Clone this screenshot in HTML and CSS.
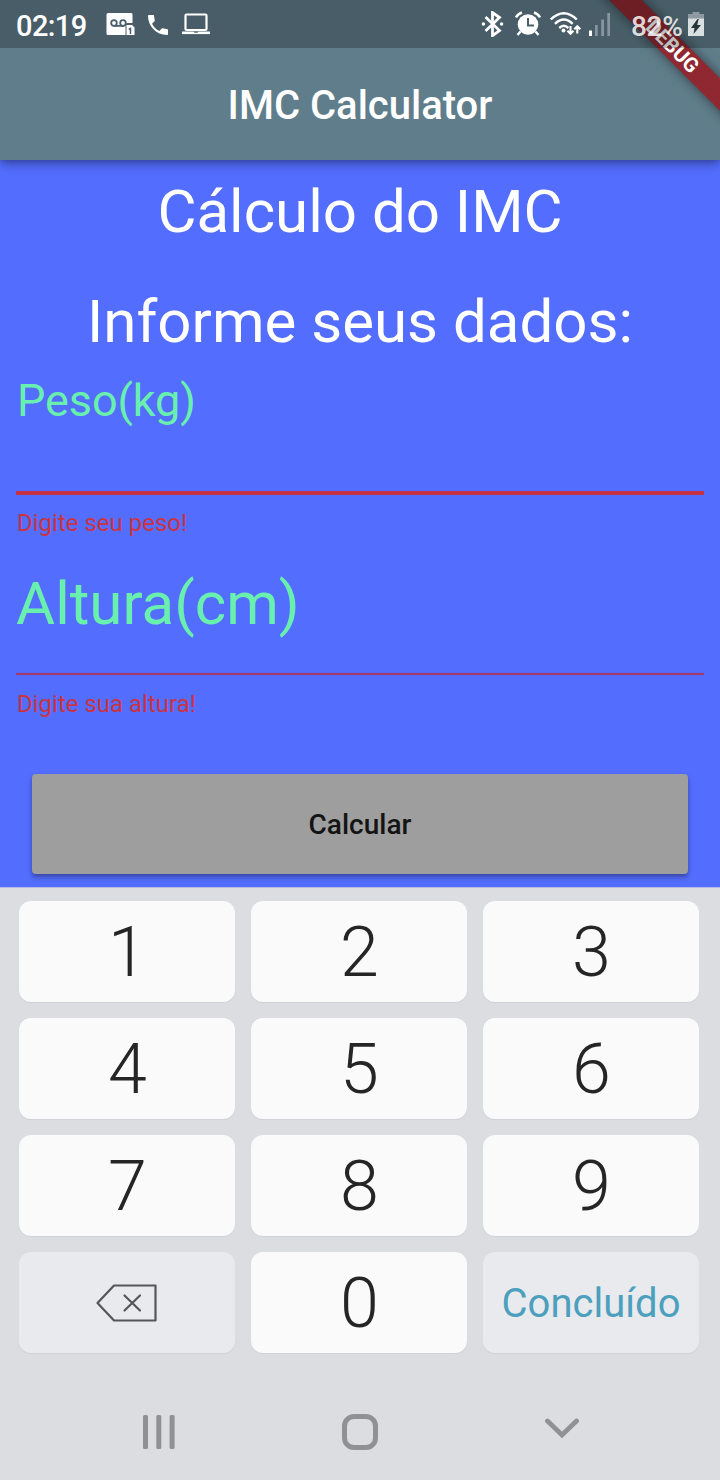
FILE: index.html
```html
<!DOCTYPE html>
<html lang="pt">
<head>
<meta charset="utf-8">
<title>IMC Calculator</title>
<link rel="stylesheet" href="styles.css">
</head>
<body>
<div class="screen">
  <header class="appbar">
    <div class="statusbar">
      <span class="clock">02:19</span>
      <svg class="ic-voicemail" width="30" height="24" viewBox="0 0 30 24">
        <path fill="#fff" d="M2 1h23a1.500 1.500 0 0 1 1.500 1.500V11h-6v12H2a1.500 1.500 0 0 1-1.500-1.500v-19A1.500 1.500 0 0 1 2 1z"/>
        <g fill="none" stroke="#4a5f69" stroke-width="1.800"><circle cx="8" cy="11" r="2.800"/><circle cx="17" cy="11" r="2.800"/><path d="M8 13.900h10"/></g>
        <path fill="#fff" stroke="#4a5f69" d="M20 12.500h6l3 3v8h-9z"/>
        <path fill="none" stroke="#4a5f69" stroke-width="1.500" d="M22.800 17.500l1.700-1v5.500"/>
      </svg>
      <svg class="ic-phone" width="20" height="20" viewBox="3 3 18 18"><path fill="#fff" d="M6.620 10.790c1.440 2.830 3.760 5.140 6.590 6.590l2.200-2.200c.27-.27.67-.36 1.020-.24 1.120.37 2.330.57 3.570.57.55 0 1 .45 1 1V20c0 .55-.45 1-1 1-9.390 0-17-7.610-17-17 0-.55.45-1 1-1h3.500c.55 0 1 .45 1 1 0 1.250.2 2.450.57 3.570.11.350.03.74-.25 1.020l-2.200 2.200z"/></svg>
      <svg class="ic-laptop" width="28" height="22" viewBox="0 0 28 22"><rect x="3.500" y="1.500" width="21" height="15.500" rx="1" fill="none" stroke="#fff" stroke-width="2.200"/><path fill="#fff" d="M0 18.500h28v2.600H0z"/><path fill="#4a5f69" d="M11.500 18.500h5l-1 1.200h-3z"/></svg>
      <span class="spacer"></span>
      <svg class="ic-bt" width="24" height="26" viewBox="0 0 24 26"><path fill="none" stroke="#fff" stroke-width="2.800" d="M4.500 6l14 13.500-7 5.200V1.500l7 5L4.500 20"/><circle cx="2.400" cy="13" r="1.700" fill="#fff"/><circle cx="20.600" cy="13" r="1.700" fill="#fff"/></svg>
      <svg class="ic-alarm" width="26" height="26" viewBox="0 0 26 26"><circle cx="13" cy="13.500" r="10.300" fill="#fff"/><g fill="none" stroke="#fff" stroke-width="2.400"><path d="M1 6.500q1.500-3.500 6-5M25 6.500q-1.500-3.500-6-5M5.500 20.500L2.500 24M20.500 20.500l3 3.500"/></g><path fill="none" stroke="#4a5f69" stroke-width="2" d="M13 7v7.500h6"/></svg>
      <svg class="ic-wifi" width="32" height="26" viewBox="0 0 32 26"><g fill="none" stroke="#fff" stroke-width="2.400"><path d="M.8 8.500q13-12.500 26 0M5 12.800q8.800-8.500 17.600 0M9.200 17q4.600-4.300 9.200 0"/></g><circle cx="13.500" cy="19.500" r="2" fill="#fff"/><g fill="none" stroke="#fff" stroke-width="2.100"><path d="M20.500 15v8M17.500 19.800l3 3L23.500 19.800M27.300 22.500V15.500M24.300 18.300l3-3 3 3"/></g></svg>
      <svg class="ic-signal" width="22" height="24" viewBox="0 0 22 24"><path fill="#fff" d="M0 17.500h3v5.500H0z"/><path fill="#8795a0" d="M6 12h2.700v11H6zM12.200 6.500H15V23h-2.800zM18.300 0H21v23h-2.700z"/></svg>
      <span class="battery-level">82%</span>
      <svg class="ic-battery" width="16" height="25" viewBox="0 0 16 25"><path fill="#fff" opacity=".38" d="M4.500 0h7v2H16v5H0V2h4.500z"/><path fill="#dadfe2" d="M0 6.500h16V24H0z"/><path fill="#28343b" d="M9.500 7L3 16h3.500L5.500 22 13 13H9.200l1.500-6z"/></svg>
    </div>
    <h1 class="title">IMC Calculator</h1>
    <div class="banner-clip"><div class="banner">DEBUG</div></div>
  </header>

  <main class="form">
    <p class="heading">Cálculo do IMC</p>
    <p class="heading">Informe seus dados:</p>
    <div class="field field-focused">
      <label class="label-small">Peso(kg)</label>
      <div class="underline underline-thick"></div>
      <p class="error">Digite seu peso!</p>
    </div>
    <div class="field">
      <label class="label-large">Altura(cm)</label>
      <div class="underline"></div>
      <p class="error error-lower">Digite sua altura!</p>
    </div>
    <button class="submit">Calcular</button>
  </main>

  <section class="keyboard">
    <div class="keys">
      <div class="key">1</div><div class="key">2</div><div class="key">3</div>
      <div class="key">4</div><div class="key">5</div><div class="key">6</div>
      <div class="key">7</div><div class="key">8</div><div class="key">9</div>
      <div class="key key-soft key-erase"><svg width="62" height="40" viewBox="0 0 62 40"><g fill="none" stroke="#55565a" stroke-width="2.200" stroke-linejoin="round" stroke-linecap="round"><path d="M2.500 20L19 2.500h41.500v35H19zM29.500 12.500l15.500 15M45 12.500L29.500 27.500"/></g></svg></div>
      <div class="key">0</div>
      <div class="key key-soft key-done">Concluído</div>
    </div>
    <nav class="navbar">
      <svg width="32" height="34" viewBox="0 0 32 34"><g fill="#909194"><rect width="5" height="34" rx="1.500"/><rect x="13.300" width="5" height="34" rx="1.500"/><rect x="26.600" width="5" height="34" rx="1.500"/></g></svg>
      <svg width="36" height="36" viewBox="0 0 36 36"><rect x="2.500" y="2.500" width="31" height="31" rx="9.500" fill="none" stroke="#909194" stroke-width="5"/></svg>
      <svg class="nav-down" width="34" height="22" viewBox="0 0 34 22"><path d="M2.500 3L17 17 31.500 3" fill="none" stroke="#909194" stroke-width="4.800" stroke-linecap="round"/></svg>
    </nav>
  </section>
</div>
</body>
</html>
```
FILE: styles.css
```css
* { box-sizing: border-box; margin: 0; padding: 0; }
body { font-family: Roboto, sans-serif; }
svg { display: block; flex: none; }
.screen { width: 720px; height: 1480px; display: flex; flex-direction: column; overflow: hidden; background: #536dfe; }

.appbar { position: relative; z-index: 1; height: 160px; background: #607d8b; box-shadow: 0 4px 10px rgba(0,0,0,.34), 0 1px 4px rgba(0,0,0,.12); }
.statusbar { position: relative; z-index: 2; height: 48px; display: flex; align-items: center; padding: 0 16px; background: rgba(0,0,0,.25); color: #fff; font-size: 29px; font-weight: 500; }
.clock { width: 90px; letter-spacing: -.6px; padding-top: 3px; }
.ic-phone { margin-left: 12px; margin-top: 1px; }
.ic-laptop { margin-left: 14px; }
.spacer { flex: 1; }
.ic-alarm { margin-left: 10px; }
.ic-wifi { margin-left: 9px; }
.ic-signal { margin-left: 7px; margin-top: 2px; }
.battery-level { margin-left: 20px; width: 52px; padding-top: 4px; white-space: nowrap; font-weight: 500; color: rgba(255,255,255,.82); font-size: 28px; letter-spacing: -.3px; }
.ic-battery { margin-left: 5px; }
.title { height: 112px; line-height: 116px; text-align: center; color: #fff; font-size: 40px; font-weight: 500; }
.banner-clip { position: absolute; z-index: 1; top: 0; right: 0; width: 160px; height: 160px; overflow: hidden; }
.banner { position: absolute; left: 14px; top: 36.500px; width: 200px; height: 23px; line-height: 23px; padding-right: 5px; text-align: center; transform: rotate(45deg); background: rgba(150,28,36,.88); box-shadow: 0 0 12px rgba(0,0,0,.5); color: #fff; font-size: 20.400px; font-weight: 700; }

.form { height: 727px; padding: 17px 16px 0; display: flex; flex-direction: column; }
.heading { flex: none; height: 70px; line-height: 70px; margin-bottom: 40px; text-align: center; color: #fff; font-size: 60px; }
.heading + .heading { margin-bottom: 19px; }
.field { flex: none; display: flex; flex-direction: column; color: #69f0ae; height: 181px; }
.field-focused { height: 192px; }
.label-small { height: 115px; line-height: 50px; font-size: 45px; padding-left: 1px; letter-spacing: -.1px; }
.label-large { height: 105px; line-height: 72px; font-size: 60px; }
.underline { height: 2px; background: #a03c70; box-shadow: 0 0 1px #a14280; }
.underline-thick { height: 4px; background: #c53245; box-shadow: none; }
.error { margin-top: 14px; line-height: 29px; font-size: 24px; color: #cb3343; padding-left: 1px; }
.error-lower { margin-top: 15px; }
.submit { flex: none; margin: 25px 16px 0; height: 100px; border: 0; border-radius: 4px; background: #9e9e9e; box-shadow: 0 3px 5px rgba(0,0,0,.35); color: #141414; font: 500 28px Roboto, sans-serif; }

.keyboard { height: 593px; background: #dcdde1; border-top: 1px solid #b8bce0; display: flex; flex-direction: column; }
.keys { display: grid; grid-template-columns: repeat(3, 216px); grid-auto-rows: 101px; gap: 16px; padding: 13px 19px 0; }
.key { display: flex; align-items: center; justify-content: center; padding-left: 1px; border-radius: 12px; background: #fafafa; box-shadow: 0 1px 1px #d0d1d6; color: #252525; font-size: 70px; font-weight: 300; }
.key-soft { background: #e9eaee; padding-left: 0; }
.key-erase { padding-right: 2px; }
.key-done { padding-top: 2px; color: #4c9fbd; font-size: 40px; font-weight: 400; }
.navbar { display: flex; justify-content: space-between; align-items: center; padding: 0 141px 0 143px; margin-top: 61px; height: 36px; }
.nav-down { margin-top: -6px; }
```
